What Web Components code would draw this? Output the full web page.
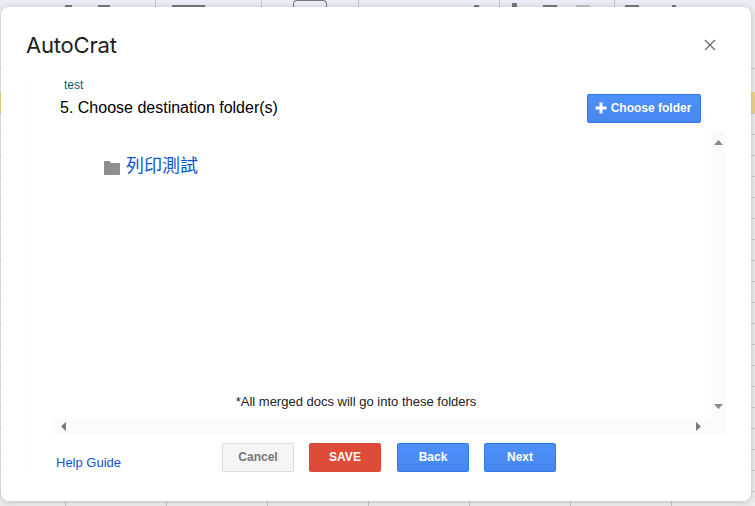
<!DOCTYPE html>
<html>
<head>
<meta charset="utf-8">
<title>AutoCrat</title>
<style>
  html, body { margin: 0; padding: 0; background: #fff; }
  body { width: 755px; height: 506px; overflow: hidden; font-family: "Liberation Sans", Arial, sans-serif; }
</style>
</head>
<body>
<sheet-backdrop>
  <auto-dialog heading="AutoCrat">
    <step-header slot="top" label="test" title-text="5. Choose destination folder(s)">
      <action-button kind="blue" icon="plus" compact>Choose folder</action-button>
    </step-header>
    <scroll-pane slot="middle">
      <folder-link>列印測試</folder-link>
      <span slot="note">*All merged docs will go into these folders</span>
    </scroll-pane>
    <a slot="help" href="#">Help Guide</a>
    <action-button slot="actions" kind="grey">Cancel</action-button>
    <action-button slot="actions" kind="red">SAVE</action-button>
    <action-button slot="actions" kind="blue" style="margin-left:1px">Back</action-button>
    <action-button slot="actions" kind="blue">Next</action-button>
  </auto-dialog>
</sheet-backdrop>

<script>
class SheetBackdrop extends HTMLElement {
  constructor() {
    super();
    this.attachShadow({ mode: 'open' });
    this.shadowRoot.innerHTML = `
      <style>
        :host { display: block; position: relative; width: 755px; height: 506px; overflow: hidden; background: #f1f1f1; }
        .toolbar { height: 7px; background: #e9eef7; display: flex; align-items: flex-end; overflow: hidden; }
        .toolbar i { display: block; flex: none; }
        .sep { width: 1px; height: 7px; background: #c4c8cc; }
        .dot { height: 2px; background: #777; }
        .box { width: 34px; height: 7px; box-sizing: border-box; border: 1px solid #777; border-bottom: 0; border-radius: 4px 4px 0 0; }
        .grid {
          height: 499px;
          display: flex;
          flex-direction: column;
          background-color: #eeeeee;
          background-image: linear-gradient(90deg, #c4c4c4 1px, transparent 1px);
          background-size: 101px 100%;
          background-position: 65px 0;
        }
        .head { height: 85px; flex: none; box-sizing: border-box; border-bottom: 0; background: linear-gradient(#cfcfcf, #cfcfcf) 0 61px / 100% 1px no-repeat; }
        .rows {
          flex: 1;
          background-image:
            linear-gradient(#f0d48a, #f0d48a),
            linear-gradient(#cfcfcf 1px, transparent 1px);
          background-size: 100% 21px, 100% 21px;
          background-repeat: no-repeat, repeat;
        }
        .dialog-layer { position: absolute; left: 1px; top: 7px; }
      </style>
      <div class="toolbar">
        <i class="dot" style="width:7px;margin-left:65px"></i>
        <i class="dot" style="width:12px;margin-left:26px"></i>
        <i class="sep" style="margin-left:45px"></i>
        <i class="dot" style="width:33px;margin-left:16px"></i>
        <i class="sep" style="margin-left:56px"></i>
        <i class="box" style="margin-left:31px"></i>
        <i class="sep" style="margin-left:31px"></i>
        <i class="dot" style="width:5px;margin-left:115px"></i>
        <i class="sep" style="margin-left:20px"></i>
        <i class="dot" style="width:5px;margin-left:12px;height:4px"></i>
        <i class="dot" style="width:14px;margin-left:26px"></i>
        <i class="dot" style="width:14px;margin-left:19px;background:#c4c4c4"></i>
        <i class="sep" style="margin-left:24px"></i>
        <i class="dot" style="width:14px;margin-left:10px"></i>
        <i class="dot" style="width:4px;margin-left:33px"></i>
      </div>
      <div class="grid">
        <div class="head"></div>
        <div class="rows"></div>
      </div>
      <div class="dialog-layer"><slot></slot></div>
    `;
  }
}

class AutoDialog extends HTMLElement {
  constructor() {
    super();
    this.attachShadow({ mode: 'open' });
    this.shadowRoot.innerHTML = `
      <style>
        :host { display: block; width: 750px; height: 494px; background: #fff; border-radius: 8px; box-shadow: 0 1px 6px rgba(60,64,67,.3); box-sizing: border-box; }
        header { display: flex; justify-content: space-between; align-items: center; height: 70px; padding: 6px 35px 0 25px; box-sizing: border-box; }
        h1 { margin: 0; font: 400 22px "Inter", "Liberation Sans", sans-serif; color: #202124; letter-spacing: -0.2px; }
        .close { display: block; width: 12px; height: 12px; }
        .frame { margin-left: 25px; width: 700px; height: 398px; border-left: 1px solid #fbfbfb; box-sizing: border-box; display: flex; flex-direction: column; }
        footer { display: flex; align-items: flex-start; padding: 9px 0 0 29px; }
        .help { width: 166px; padding-top: 9px; line-height: 20px; }
        ::slotted(a) { font: 13px "Liberation Sans", Arial, sans-serif; color: #1155cc; text-decoration: none; }
        .actions { display: flex; gap: 15px; }
      </style>
      <header>
        <h1></h1>
        <svg class="close" viewBox="0 0 12 12"><path d="M1 1 11 11M11 1 1 11" stroke="#6f6f6f" stroke-width="1.4" fill="none"/></svg>
      </header>
      <div class="frame">
        <slot name="top"></slot>
        <slot name="middle"></slot>
        <footer>
          <div class="help"><slot name="help"></slot></div>
          <div class="actions"><slot name="actions"></slot></div>
        </footer>
      </div>
    `;
  }
  connectedCallback() {
    this.shadowRoot.querySelector('h1').textContent = this.getAttribute('heading');
  }
}

class StepHeader extends HTMLElement {
  constructor() {
    super();
    this.attachShadow({ mode: 'open' });
    this.shadowRoot.innerHTML = `
      <style>
        :host { display: flex; justify-content: space-between; align-items: flex-end; height: 53px; padding: 0 25px 7px 33px; box-sizing: border-box; font-family: "Liberation Sans", Arial, sans-serif; }
        .label { font-size: 12px; line-height: 14px; color: #00637a; padding-left: 4px; margin-bottom: 7px; }
        .title { font-size: 16px; line-height: 18px; color: #000; padding-bottom: 6px; }
      </style>
      <div>
        <div class="label"></div>
        <div class="title"></div>
      </div>
      <slot></slot>
    `;
  }
  connectedCallback() {
    this.shadowRoot.querySelector('.label').textContent = this.getAttribute('label');
    this.shadowRoot.querySelector('.title').textContent = this.getAttribute('title-text');
  }
}

class ActionButton extends HTMLElement {
  constructor() {
    super();
    this.attachShadow({ mode: 'open' });
    this.shadowRoot.innerHTML = `
      <style>
        :host { display: inline-flex; align-items: center; justify-content: center; gap: 4px; width: 72px; height: 29px; box-sizing: border-box; border: 1px solid; border-radius: 2px; padding-bottom: 2px; font: bold 12px "Liberation Sans", Arial, sans-serif; }
        :host([kind=blue]) { background: linear-gradient(#4d90fe, #4787ed); border-color: #3079ed; color: #fff; }
        :host([kind=red]) { background: #dd4b39; border-color: #dd4b39; color: #fff; }
        :host([kind=grey]) { background: #f5f5f5; border-color: #dcdcdc; color: #777; }
        :host([compact]) { width: 114px; padding-right: 2px; }
        svg { display: none; width: 12px; height: 12px; }
        :host([icon=plus]) svg { display: block; }
      </style>
      <svg viewBox="0 0 12 12"><path d="M4.5 .5h3v4h4v3h-4v4h-3v-4h-4v-3h4z" fill="#fff"/></svg>
      <slot></slot>
    `;
  }
}

class ScrollPane extends HTMLElement {
  constructor() {
    super();
    this.attachShadow({ mode: 'open' });
    this.shadowRoot.innerHTML = `
      <style>
        :host { display: grid; grid-template-columns: 659px 15px; grid-template-rows: 289px 15px; width: 674px; height: 304px; margin-left: 25px; font-family: "Liberation Sans", Arial, sans-serif; }
        .content { display: flex; flex-direction: column; justify-content: space-between; padding: 24px 0 10px 52px; box-sizing: border-box; }
        .note { font-size: 13px; line-height: 14px; color: #222; text-align: center; padding-right: 103px; }
        .bar { background: #fbfbfb; display: flex; justify-content: space-between; align-items: center; box-sizing: border-box; }
        .v { flex-direction: column; padding: 10px 0 25px; grid-row: 1 / 3; grid-column: 2; }
        .h { padding: 0 10px 0 9px; }
        svg { display: block; }
      </style>
      <div class="content">
        <slot></slot>
        <div class="note"><slot name="note"></slot></div>
      </div>
      <div class="bar v">
        <svg width="9" height="5" viewBox="0 0 9 5"><path d="M4.5 0 9 5H0z" fill="#8a8a8a"/></svg>
        <svg width="9" height="5" viewBox="0 0 9 5"><path d="M0 0h9L4.5 5z" fill="#8a8a8a"/></svg>
      </div>
      <div class="bar h">
        <svg width="5" height="9" viewBox="0 0 5 9"><path d="M5 0v9L0 4.5z" fill="#7a7a7a"/></svg>
        <svg width="5" height="9" viewBox="0 0 5 9"><path d="M0 0l5 4.5L0 9z" fill="#7a7a7a"/></svg>
      </div>
    `;
  }
}

class FolderLink extends HTMLElement {
  constructor() {
    super();
    this.attachShadow({ mode: 'open' });
    this.shadowRoot.innerHTML = `
      <style>
        :host { display: flex; align-items: center; gap: 6px; font: 18px "Liberation Sans", "Noto Sans CJK TC", sans-serif; color: #1155cc; line-height: 24px; }
        svg { display: block; width: 16px; height: 14px; margin-top: 4px; }
      </style>
      <svg viewBox="0 0 16 14"><path d="M0 1C0 .4.4 0 1 0h4.5l1.6 2H15c.6 0 1 .4 1 1v10c0 .6-.4 1-1 1H1c-.6 0-1-.4-1-1z" fill="#8f8f8f"/></svg>
      <slot></slot>
    `;
  }
}

customElements.define('sheet-backdrop', SheetBackdrop);
customElements.define('auto-dialog', AutoDialog);
customElements.define('step-header', StepHeader);
customElements.define('action-button', ActionButton);
customElements.define('scroll-pane', ScrollPane);
customElements.define('folder-link', FolderLink);
</script>
</body>
</html>
